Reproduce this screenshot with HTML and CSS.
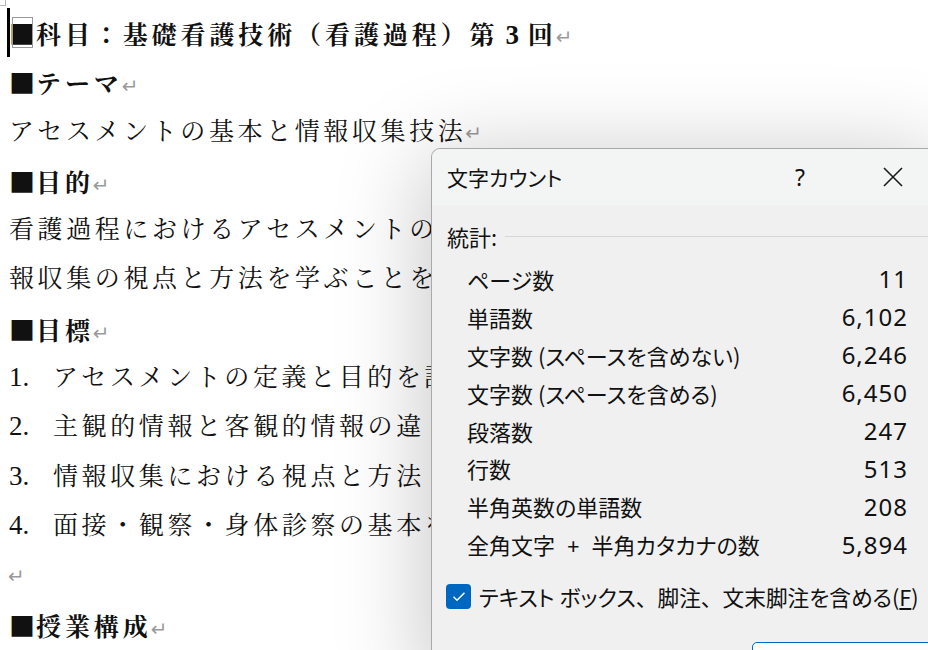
FILE: index.html
```
<!DOCTYPE html>
<html lang="ja">
<head>
<meta charset="utf-8">
<link rel="stylesheet" href="styles.css">
</head>
<body>
<div class="page">
  <span class="corner"></span>
  <span class="caret"></span>
  <div class="doc">
    <p class="line head"><span class="sq sel">■</span>科目：基礎看護技術（看護過程）第<span class="num">3</span>回<span class="ret">↵</span></p>
    <p class="line head"><span class="sq">■</span>テーマ<span class="ret">↵</span></p>
    <p class="line">アセスメントの基本と情報収集技法<span class="ret">↵</span></p>
    <p class="line head"><span class="sq">■</span>目的<span class="ret">↵</span></p>
    <p class="line">看護過程におけるアセスメントの</p>
    <p class="line">報収集の視点と方法を学ぶことを</p>
    <p class="line head"><span class="sq">■</span>目標<span class="ret">↵</span></p>
    <p class="line item"><span class="n">1.</span>アセスメントの定義と目的を説</p>
    <p class="line item"><span class="n">2.</span>主観的情報と客観的情報の違</p>
    <p class="line item"><span class="n">3.</span>情報収集における視点と方法</p>
    <p class="line item"><span class="n">4.</span>面接・観察・身体診察の基本を</p>
    <p class="line"><span class="ret">↵</span></p>
    <p class="line head"><span class="sq">■</span>授業構成<span class="ret">↵</span></p>
  </div>

  <div class="dialog">
    <div class="titlebar">
      <span class="title">文字カウント</span>
      <span class="help">?</span>
      <svg class="close" width="20" height="20" viewBox="0 0 20 20"><path d="M1 1L19 19M19 1L1 19" stroke="#1a1a1a" stroke-width="1.6" fill="none"/></svg>
    </div>
    <div class="section">
      <span class="section-label">統計:</span>
      <span class="rule"></span>
    </div>
    <div class="stats">
      <div class="row"><span>ページ数</span><span class="val">11</span></div>
      <div class="row"><span>単語数</span><span class="val">6,102</span></div>
      <div class="row"><span>文字数 (スペースを含めない)</span><span class="val">6,246</span></div>
      <div class="row"><span>文字数 (スペースを含める)</span><span class="val">6,450</span></div>
      <div class="row"><span>段落数</span><span class="val">247</span></div>
      <div class="row"><span>行数</span><span class="val">513</span></div>
      <div class="row"><span>半角英数の単語数</span><span class="val">208</span></div>
      <div class="row"><span>全角文字<span class="plus">+</span>半角カタカナの数</span><span class="val">5,894</span></div>
    </div>
    <label class="check">
      <span class="box"><svg width="14" height="11" viewBox="0 0 14 11"><path d="M1.5 5.8L5 9.2L12.5 1.8" stroke="#fff" stroke-width="1.5" fill="none"/></svg></span>
      <span class="check-text">テキスト ボックス<span class="full">、</span>脚注<span class="full">、</span>文末脚注を含める(<u>F</u>)</span>
    </label>
    <div class="btn"></div>
  </div>
</div>
</body>
</html>
```
FILE: styles.css
```
html, body {
  margin: 0;
  padding: 0;
  background: #ffffff;
}
.page {
  position: relative;
  width: 928px;
  height: 650px;
  overflow: hidden;
  background: #ffffff;
}
.corner {
  position: absolute;
  left: 0;
  top: 0;
  width: 5px;
  height: 5px;
  border-right: 1px solid #b8b8b8;
  border-bottom: 1px solid #b8b8b8;
}
.caret {
  position: absolute;
  left: 7px;
  top: 8px;
  width: 3px;
  height: 49px;
  background: #000;
}
.doc {
  padding: 8px 0 0 9px;
  font-family: "Liberation Serif", "Noto Serif CJK JP", "Noto Sans CJK JP", serif;
  font-size: 25px;
  color: #111;
}
.line {
  margin: 0;
  height: 49.3px;
  line-height: 49.3px;
  white-space: nowrap;
  letter-spacing: 3.6px;
}
.head {
  font-weight: bold;
  letter-spacing: 3.9px;
}
.sq {
  font-family: "Noto Sans CJK JP", sans-serif;
  font-size: 26px;
  letter-spacing: 1px;
}
.sel {
  outline: 1px solid #9a9a9a;
  outline-offset: -4px;
}
.num {
  font-size: 27px;
  padding: 0 5px 0 7px;
}
.ret {
  font-family: "DejaVu Sans", sans-serif;
  font-weight: normal;
  font-size: 20px;
  color: #9a9a9a;
  letter-spacing: 0;
  margin-left: -1px;
}
.item .n {
  display: inline-block;
  width: 44px;
  font-size: 27px;
  letter-spacing: 0;
}

.dialog {
  position: absolute;
  left: 431px;
  top: 148px;
  width: 520px;
  height: 540px;
  box-sizing: border-box;
  border: 1px solid #a9a9a9;
  border-radius: 9px;
  background: #f0f0f0;
  box-shadow: -6px 8px 90px rgba(0, 0, 0, 0.22);
  font-family: "Noto Sans CJK JP", "Noto Sans", sans-serif;
  font-feature-settings: "palt";
  color: #111;
  display: flex;
  flex-direction: column;
}
.titlebar {
  height: 56px;
  display: flex;
  align-items: center;
  padding: 0 0 0 15px;
  background: #f3f4f4;
  border-radius: 9px 9px 0 0;
}
.title {
  font-size: 21px;
  flex: 1;
}
.help {
  font-family: "Noto Sans", sans-serif;
  font-size: 23px;
  width: 12px;
  margin-right: 76px;
}
.close {
  margin-right: 47px;
}
.section {
  margin-top: 16px;
  height: 30px;
  display: flex;
  align-items: center;
  padding-left: 15px;
  gap: 8px;
}
.section-label {
  font-size: 22px;
}
.rule {
  flex: 1;
  height: 1px;
  background: #d6d6d6;
}
.stats {
  margin-top: 9px;
  padding: 0 42px 0 35px;
}
.row {
  height: 37.9px;
  display: flex;
  align-items: center;
  justify-content: space-between;
  font-size: 22px;
}
.plus {
  font-family: "Noto Sans", sans-serif;
  padding: 0 12px;
}
.val {
  font-family: "Noto Sans", sans-serif;
  font-size: 24px;
  letter-spacing: 1px;
}
.check {
  margin-top: 18px;
  height: 30px;
  display: flex;
  align-items: center;
  padding-left: 14px;
  gap: 8px;
}
.box {
  width: 25px;
  height: 25px;
  border-radius: 4px;
  background: #0067c0;
  display: flex;
  align-items: center;
  justify-content: center;
}
.check-text {
  font-size: 21.7px;
}
.full {
  font-feature-settings: normal;
}
.btn {
  margin-top: 31px;
  margin-left: 320px;
  width: 180px;
  height: 40px;
  border: 1px solid #0067c0;
  border-radius: 5px;
  background: #fdfdfd;
}
```
